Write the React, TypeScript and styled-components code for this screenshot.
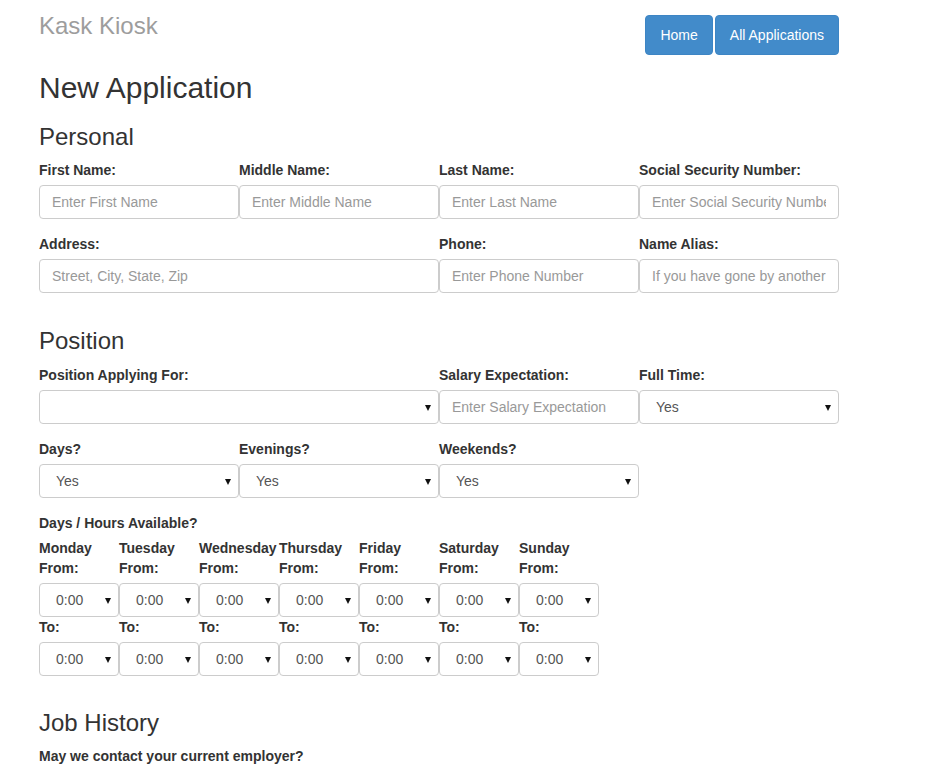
import React from 'react';
import styled, { createGlobalStyle } from 'styled-components';

const GlobalStyle = createGlobalStyle`
  * { box-sizing: border-box; }
  html, body {
    margin: 0;
    height: 765px;
    overflow: hidden;
    background: #fff;
  }
  body {
    font-family: 'Liberation Sans', Arial, Helvetica, sans-serif;
    font-size: 14px;
    line-height: 20px;
    color: #333;
  }
`;

const Page = styled.div`
  width: 800px;
  margin-left: 39px;
`;

const Header = styled.div`
  display: flex;
  justify-content: space-between;
  align-items: flex-start;
  padding-top: 15px;
`;

const Brand = styled.div`
  font-size: 24px;
  line-height: 22px;
  color: #9d9d9d;
`;

const Nav = styled.div`
  display: flex;
  gap: 2px;
`;

const NavButton = styled.button`
  font-family: inherit;
  font-size: 14px;
  line-height: 20px;
  padding: 9px 14px;
  color: #fff;
  background: #428bca;
  border: 1px solid #3d85c4;
  border-radius: 4px;
  cursor: pointer;
`;

const Title = styled.h2`
  font-size: 30px;
  font-weight: 500;
  line-height: 33px;
  margin: 16px 0 0;
`;

const Section = styled.h3`
  font-size: 24px;
  font-weight: 500;
  line-height: 26.4px;
  margin: 20px 0 10px;
`;

const Row = styled.div`
  display: grid;
  grid-template-columns: repeat(4, 200px);
`;

const Group = styled.div<{ span?: number }>`
  grid-column: span ${(p) => p.span ?? 1};
  margin-bottom: 15px;
`;

const Label = styled.label`
  display: block;
  font-weight: bold;
  margin-bottom: 5px;
  white-space: nowrap;
`;

const Input = styled.input`
  display: block;
  width: 100%;
  height: 34px;
  padding: 6px 12px;
  font-family: inherit;
  font-size: 14px;
  color: #555;
  border: 1px solid #ccc;
  border-radius: 4px;
  &::placeholder { color: #999; }
`;

const SelectWrap = styled.div`
  position: relative;
  &::after {
    content: '';
    position: absolute;
    right: 8px;
    top: 15px;
    border-left: 3.5px solid transparent;
    border-right: 3.5px solid transparent;
    border-top: 6px solid #111;
    pointer-events: none;
  }
`;

const Select = styled.select`
  display: block;
  width: 100%;
  height: 34px;
  padding: 6px 20px 6px 16px;
  appearance: none;
  background: #fff;
  font-family: inherit;
  font-size: 14px;
  color: #555;
  border: 1px solid #ccc;
  border-radius: 4px;
`;

const DayGrid = styled.div`
  display: grid;
  grid-template-columns: repeat(7, 80px);
  margin-bottom: 34px;
`;

const DayCol = styled.div`
  display: flex;
  flex-direction: column;
`;

const DayLabel = styled.label<{ gap?: boolean }>`
  display: block;
  font-weight: bold;
  white-space: nowrap;
  margin-bottom: ${(p) => (p.gap ? '5px' : '0')};
`;

const Dropdown: React.FC<{ value?: string }> = ({ value }) => (
  <SelectWrap>
    <Select defaultValue={value ?? ''}>
      {value ? <option>{value}</option> : <option value="" />}
    </Select>
  </SelectWrap>
);

const days = ['Monday', 'Tuesday', 'Wednesday', 'Thursday', 'Friday', 'Saturday', 'Sunday'];

const App: React.FC = () => (
  <>
    <GlobalStyle />
    <Page>
      <Header>
        <Brand>Kask Kiosk</Brand>
        <Nav>
          <NavButton>Home</NavButton>
          <NavButton>All Applications</NavButton>
        </Nav>
      </Header>

      <Title>New Application</Title>

      <Section>Personal</Section>
      <Row>
        <Group>
          <Label>First Name:</Label>
          <Input placeholder="Enter First Name" />
        </Group>
        <Group>
          <Label>Middle Name:</Label>
          <Input placeholder="Enter Middle Name" />
        </Group>
        <Group>
          <Label>Last Name:</Label>
          <Input placeholder="Enter Last Name" />
        </Group>
        <Group>
          <Label>Social Security Number:</Label>
          <Input placeholder="Enter Social Security Number" />
        </Group>
        <Group span={2}>
          <Label>Address:</Label>
          <Input placeholder="Street, City, State, Zip" />
        </Group>
        <Group>
          <Label>Phone:</Label>
          <Input placeholder="Enter Phone Number" />
        </Group>
        <Group>
          <Label>Name Alias:</Label>
          <Input placeholder="If you have gone by another name" />
        </Group>
      </Row>

      <Section>Position</Section>
      <Row>
        <Group span={2}>
          <Label>Position Applying For:</Label>
          <Dropdown />
        </Group>
        <Group>
          <Label>Salary Expectation:</Label>
          <Input placeholder="Enter Salary Expectation" />
        </Group>
        <Group>
          <Label>Full Time:</Label>
          <Dropdown value="Yes" />
        </Group>
        <Group>
          <Label>Days?</Label>
          <Dropdown value="Yes" />
        </Group>
        <Group>
          <Label>Evenings?</Label>
          <Dropdown value="Yes" />
        </Group>
        <Group>
          <Label>Weekends?</Label>
          <Dropdown value="Yes" />
        </Group>
      </Row>

      <Label>Days / Hours Available?</Label>
      <DayGrid>
        {days.map((d) => (
          <DayCol key={d}>
            <DayLabel>{d}</DayLabel>
            <DayLabel gap>From:</DayLabel>
            <Dropdown value="0:00" />
            <DayLabel gap>To:</DayLabel>
            <Dropdown value="0:00" />
          </DayCol>
        ))}
      </DayGrid>

      <Section>Job History</Section>
      <Label>May we contact your current employer?</Label>
    </Page>
  </>
);

export default App;
